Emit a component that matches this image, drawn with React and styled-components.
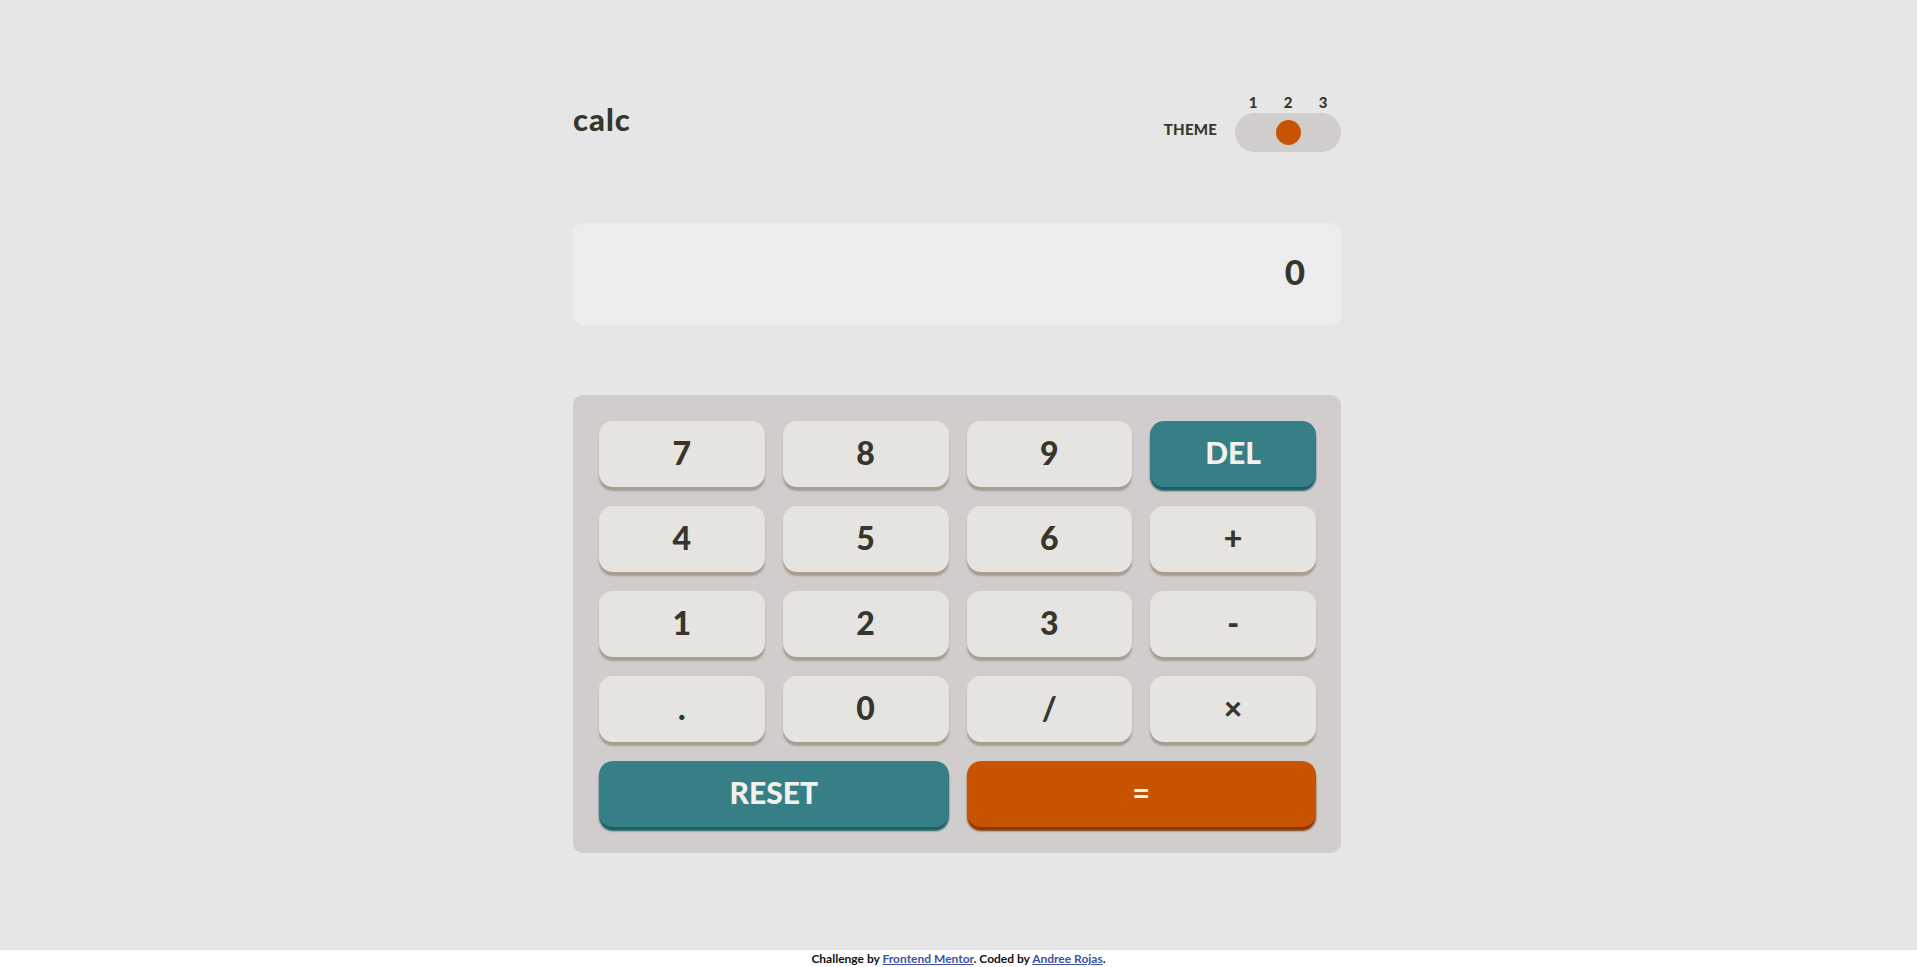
import styled, { createGlobalStyle } from "styled-components"

const GlobalStyle = createGlobalStyle`
    * {
        box-sizing: border-box;
    }
    body {
        margin: 0;
        background: #ffffff;
        font-family: Lato, "Open Sans", sans-serif;
        color: #36362c;
    }
`

const Main = styled.main`
    height: 950px;
    padding: 0 3px 3px 0;
    background: #e6e6e6;
    display: flex;
    align-items: center;
    justify-content: center;
`
const Calculator = styled.div`
    width: 768px;
    display: flex;
    flex-direction: column;
`
const Header = styled.header`
    display: flex;
    justify-content: space-between;
    align-items: center;
`
const Logo = styled.h1`
    margin: 0 0 7px 0;
    font-size: 31px;
    font-weight: 900;
    letter-spacing: 1px;
    line-height: 1;
    color: #36362c;
`
const ThemeSwitcher = styled.div`
    display: flex;
    align-items: flex-end;
    gap: 18px;
`
const ThemeLabel = styled.span`
    font-size: 15px;
    font-weight: 900;
    letter-spacing: 0.2px;
    margin-bottom: 14px;
`
const ToggleGroup = styled.div`
    display: flex;
    flex-direction: column;
`
const Numbers = styled.div`
    display: grid;
    grid-template-columns: repeat(3, 35px);
    justify-content: center;
    font-size: 15px;
    font-weight: 900;
    line-height: 1;
    text-align: center;
    margin-bottom: 3px;
`
const Track = styled.div`
    width: 106px;
    height: 39px;
    border-radius: 20px;
    background: #d2cdcd;
    display: grid;
    grid-template-columns: repeat(3, 35px);
    justify-content: center;
    align-items: center;
    justify-items: center;
`
const Knob = styled.span`
    grid-column: ${(p) => p.$pos};
    width: 25px;
    height: 25px;
    border-radius: 50%;
    background: #c85402;
`
const Display = styled.div`
    margin-top: 71px;
    height: 102px;
    border-radius: 10px;
    background: #ededed;
    display: flex;
    align-items: center;
    justify-content: flex-end;
    padding: 0 36px 6px 0;
    font-size: 35px;
    font-weight: 900;
`
const Keypad = styled.div`
    margin-top: 70px;
    padding: 26px 25px 26px 26px;
    border-radius: 10px;
    background: #d2cdcd;
    display: grid;
    grid-template-columns: repeat(4, 1fr);
    grid-auto-rows: 66px;
    column-gap: 18px;
    row-gap: 19px;
`

const variants = {
    plain: { bg: "#e5e4e1", shade: "#a79e91", color: "#36362c", size: "32px" },
    accent: { bg: "#377f86", shade: "#1b5f65", color: "#f3f1ec", size: "30px" },
    equals: { bg: "#c85402", shade: "#873901", color: "#fbf3ea", size: "30px" },
}

const Key = styled.button`
    grid-column: span ${(p) => p.$span || 1};
    border: none;
    border-radius: 14px;
    background: ${(p) => variants[p.$variant].bg};
    color: ${(p) => variants[p.$variant].color};
    box-shadow: 0 4px 2px ${(p) => variants[p.$variant].shade};
    font-family: Lato, "Open Sans", sans-serif;
    font-size: ${(p) => variants[p.$variant].size};
    font-weight: 900;
    padding: 0 0 3px;
    cursor: pointer;
`

const Footer = styled.footer`
    height: 17px;
    line-height: 17px;
    text-align: center;
    font-size: 12px;
    font-weight: 700;
    color: #111;
    a {
        color: #3e52a3;
    }
`

const keys = [
    ["7"], ["8"], ["9"], ["DEL", "accent"],
    ["4"], ["5"], ["6"], ["+"],
    ["1"], ["2"], ["3"], ["-"],
    ["."], ["0"], ["/"], ["×"],
    ["RESET", "accent", 2], ["=", "equals", 2],
]

function App() {
    return (
        <>
            <GlobalStyle />
            <Main>
                <Calculator>
                    <Header>
                        <Logo>calc</Logo>
                        <ThemeSwitcher>
                            <ThemeLabel>THEME</ThemeLabel>
                            <ToggleGroup>
                                <Numbers>
                                    <span>1</span>
                                    <span>2</span>
                                    <span>3</span>
                                </Numbers>
                                <Track>
                                    <Knob $pos={2} />
                                </Track>
                            </ToggleGroup>
                        </ThemeSwitcher>
                    </Header>
                    <Display>0</Display>
                    <Keypad>
                        {keys.map(([label, variant = "plain", span]) => (
                            <Key key={label} $variant={variant} $span={span}>
                                {label}
                            </Key>
                        ))}
                    </Keypad>
                </Calculator>
            </Main>
            <Footer>
                Challenge by <a href="#">Frontend Mentor</a>. Coded by <a href="#">Andree Rojas</a>.
            </Footer>
        </>
    )
}

export default App
